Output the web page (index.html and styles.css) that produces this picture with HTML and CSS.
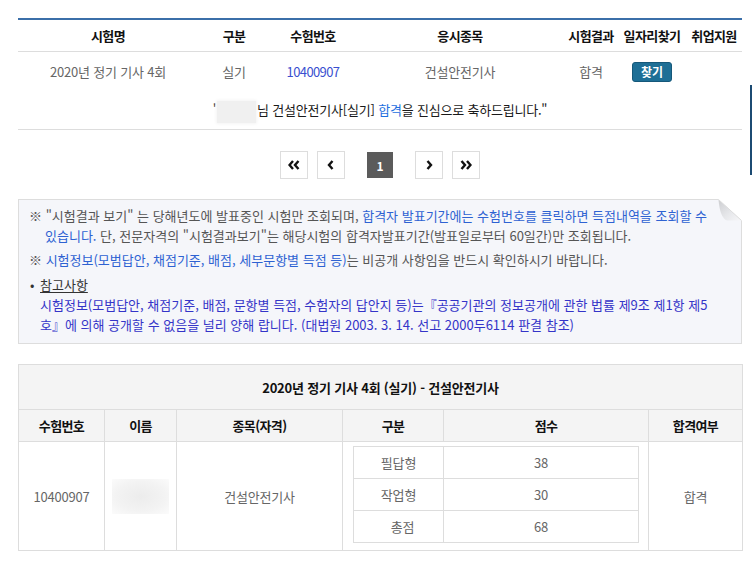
FILE: index.html
```html
<!DOCTYPE html>
<html lang="ko">
<head>
<meta charset="utf-8">
<title>시험결과</title>
<link rel="stylesheet" href="styles.css">
</head>
<body>
<div class="wrap">
  <table class="result">
    <colgroup>
      <col class="c180"><col class="c72"><col class="c86"><col class="c208"><col class="c54"><col class="c68"><col class="c56">
    </colgroup>
    <thead>
      <tr><th>시험명</th><th>구분</th><th>수험번호</th><th>응시종목</th><th>시험결과</th><th>일자리찾기</th><th>취업지원</th></tr>
    </thead>
    <tbody>
      <tr class="data">
        <td>2020년 정기 기사 4회</td><td>실기</td><td><a class="num" href="#">10400907</a></td><td>건설안전기사</td><td>합격</td><td><span class="btn">찾기</span></td><td></td>
      </tr>
      <tr class="msg">
        <td colspan="7">'<span class="blur"></span>님 건설안전기사[실기] <span class="pass">합격</span>을 진심으로 축하드립니다."</td>
      </tr>
    </tbody>
  </table>

  <div class="paging">
    <span class="pg"><svg width="12" height="10" viewBox="0 0 12 10"><polyline points="5,1 1.5,5 5,9" /><polyline points="10.5,1 7,5 10.5,9" /></svg></span>
    <span class="pg"><svg width="8" height="10" viewBox="0 0 8 10"><polyline points="5.5,1 2,5 5.5,9" /></svg></span>
    <span class="cur">1</span>
    <span class="pg"><svg width="8" height="10" viewBox="0 0 8 10"><polyline points="2.5,1 6,5 2.5,9" /></svg></span>
    <span class="pg"><svg width="12" height="10" viewBox="0 0 12 10"><polyline points="1.5,1 5,5 1.5,9" /><polyline points="7,1 10.5,5 7,9" /></svg></span>
  </div>

  <div class="notice">
    <p class="ref">※ "시험결과 보기" 는 당해년도에 발표중인 시험만 조회되며, <span class="b1">합격자 발표기간에는 수험번호를 클릭하면 득점내역을 조회할 수<br>있습니다.</span> 단, 전문자격의 "시험결과보기"는 해당시험의 합격자발표기간(발표일로부터 60일간)만 조회됩니다.</p>
    <p class="ref gap">※ <span class="b1">시험정보(모범답안, 채점기준, 배점, 세부문항별 득점 등)</span>는 비공개 사항임을 반드시 확인하시기 바랍니다.</p>
    <p class="tip"><span class="dot">•</span><u>참고사항</u></p>
    <p class="law">시험정보(모범답안, 채점기준, 배점, 문항별 득점, 수험자의 답안지 등)는『공공기관의 정보공개에 관한 법률 제9조 제1항 제5<br>호』에 의해 공개할 수 없음을 널리 양해 랍니다. (대법원 2003. 3. 14. 선고 2000두6114 판결 참조)</p>
    <svg class="fold" width="24" height="23" viewBox="0 0 24 23">
      <defs>
        <linearGradient id="fg" x1="0" y1="0" x2="1" y2="1">
          <stop offset="0" stop-color="#cdced1"/>
          <stop offset="0.55" stop-color="#e6e7ea"/>
          <stop offset="1" stop-color="#f7f7f9"/>
        </linearGradient>
      </defs>
      <polygon points="0,0 24,0 24,22" fill="#ffffff"/>
      <path d="M0.5,0.5 L23.5,21.5 L9,21.5 Q2,19 0.5,0.5 Z" fill="url(#fg)"/>
      <line x1="0.5" y1="0.5" x2="23.5" y2="21.5" stroke="#dcdcdc" stroke-width="1"/>
    </svg>
  </div>

  <table class="score">
    <colgroup>
      <col class="c86"><col class="c72"><col class="c166"><col class="c101"><col class="c205"><col class="c94">
    </colgroup>
    <thead>
      <tr class="cap"><th colspan="6">2020년 정기 기사 4회 (실기) - 건설안전기사</th></tr>
      <tr class="head"><th>수험번호</th><th>이름</th><th>종목(자격)</th><th>구분</th><th>점수</th><th>합격여부</th></tr>
    </thead>
    <tbody>
      <tr class="body">
        <td>10400907</td>
        <td><span class="blur2"></span></td>
        <td>건설안전기사</td>
        <td colspan="2" class="nest">
          <table class="inner">
            <colgroup><col class="c90"><col class="c195"></colgroup>
            <tr><td>필답형</td><td>38</td></tr>
            <tr><td>작업형</td><td>30</td></tr>
            <tr><td class="tot">총점</td><td>68</td></tr>
          </table>
        </td>
        <td>합격</td>
      </tr>
    </tbody>
  </table>
</div>
<div class="side"></div>
</body>
</html>
```

FILE: styles.css
```css
html, body {
  margin: 0;
  padding: 0;
  background: #ffffff;
}
body {
  font-family: "Noto Sans CJK KR", "Noto Sans", sans-serif;
  color: #333333;
  position: relative;
  min-height: 563px;
}
.wrap {
  width: 724px;
  margin-left: 18px;
  padding-top: 18px;
}
table {
  border-collapse: collapse;
  table-layout: fixed;
  width: 724px;
}
.c180 { width: 180px; }
.c72 { width: 72px; }
.c86 { width: 86px; }
.c208 { width: 208px; }
.c54 { width: 54px; }
.c68 { width: 68px; }
.c56 { width: 56px; }
.c166 { width: 166px; }
.c101 { width: 101px; }
.c205 { width: 205px; }
.c94 { width: 94px; }
.c90 { width: 90px; }
.c195 { width: 195px; }

.result {
  border-top: 2px solid #3b6fa9;
}
.result th {
  height: 31px;
  padding: 0;
  font-size: 13px;
  font-weight: bold;
  color: #111111;
  letter-spacing: -0.6px;
  white-space: nowrap;
  border-bottom: 1px solid #dddddd;
  text-align: center;
}
.result td {
  padding: 0;
  text-align: center;
  font-size: 13px;
  color: #666666;
  letter-spacing: -0.2px;
  white-space: nowrap;
}
.result .data td {
  height: 39px;
}
.result .msg td {
  height: 35px;
  padding-top: 3px;
  color: #1a1a1a;
  border-bottom: 1px solid #dddddd;
}
.num {
  color: #3a4fd0;
  text-decoration: none;
  letter-spacing: -0.6px;
}
.btn {
  display: inline-block;
  width: 38px;
  height: 18px;
  line-height: 17px;
  background: #1e6f96;
  border: 1px solid #15587a;
  border-radius: 3px;
  color: #ffffff;
  font-size: 12px;
  font-weight: bold;
  letter-spacing: 0;
  vertical-align: middle;
}
.blur {
  display: inline-block;
  width: 39px;
  height: 22px;
  margin: 0 1px 0 1px;
  vertical-align: middle;
  background: #f0f0f0;
  box-shadow: 0 0 3px 1px #f4f4f4;
}
.pass {
  color: #1e6fe0;
}

.paging {
  display: flex;
  justify-content: center;
  align-items: center;
  margin-top: 21px;
  height: 28px;
}
.pg {
  box-sizing: border-box;
  width: 28px;
  height: 28px;
  border: 1px solid #dddddd;
  display: flex;
  align-items: center;
  justify-content: center;
  margin: 0 4.5px;
}
.pg svg polyline {
  fill: none;
  stroke: #111111;
  stroke-width: 2.4;
  stroke-linecap: butt;
  stroke-linejoin: miter;
}
.cur {
  width: 26px;
  height: 26px;
  background: #5b5b5b;
  color: #ffffff;
  font-size: 12px;
  font-weight: bold;
  display: flex;
  align-items: center;
  justify-content: center;
  margin: 0 17.5px;
}

.notice {
  position: relative;
  margin-top: 20px;
  border: 1px solid #dddddd;
  background: #f5f6fa;
  padding: 6px 14px 8px 10px;
  font-size: 13px;
  line-height: 20px;
  color: #555555;
  letter-spacing: 0;
}
.notice p {
  margin: 0;
  white-space: nowrap;
}
.ref {
  padding-left: 16px;
  text-indent: -16px;
}
.ref.gap {
  margin-top: 4px !important;
}
.b1 {
  color: #2e62d2;
}
.tip {
  margin-top: 5px !important;
  padding-left: 1px;
  color: #333333;
}
.tip .dot {
  display: inline-block;
  width: 10px;
}
.tip u {
  text-underline-offset: 2px;
}
.law {
  padding-left: 11px;
  color: #3434c8;
}
.fold {
  position: absolute;
  top: -1px;
  right: -1px;
  display: block;
}

.score {
  margin-top: 20px;
  border: 1px solid #dddddd;
}
.score th,
.score td {
  border: 1px solid #dddddd;
  padding: 0;
  text-align: center;
  font-size: 13px;
  letter-spacing: -0.2px;
  white-space: nowrap;
}
.score th {
  background: #f4f4f4;
  color: #111111;
  font-weight: bold;
  letter-spacing: -0.6px;
}
.score .cap th {
  height: 44px;
  letter-spacing: -0.2px;
}
.score .head th {
  height: 31px;
}
.score td {
  color: #666666;
  height: 106px;
}
.score .nest {
  padding: 4px 10px 7px 10px;
  height: auto;
}
.inner {
  width: 285px;
  border: 1px solid #dddddd;
}
.score .inner td {
  height: 31px;
  border: 1px solid #dddddd;
  color: #666666;
}
.score .inner td.tot {
  padding-left: 8px;
}
.blur2 {
  display: inline-block;
  width: 57px;
  height: 35px;
  vertical-align: middle;
  background: radial-gradient(ellipse at center, #ececec 0%, #f3f3f3 60%, #fbfbfb 100%);
}

.side {
  position: absolute;
  left: 750px;
  top: 85px;
  width: 2px;
  height: 90px;
  background: #1c4b73;
}
```
